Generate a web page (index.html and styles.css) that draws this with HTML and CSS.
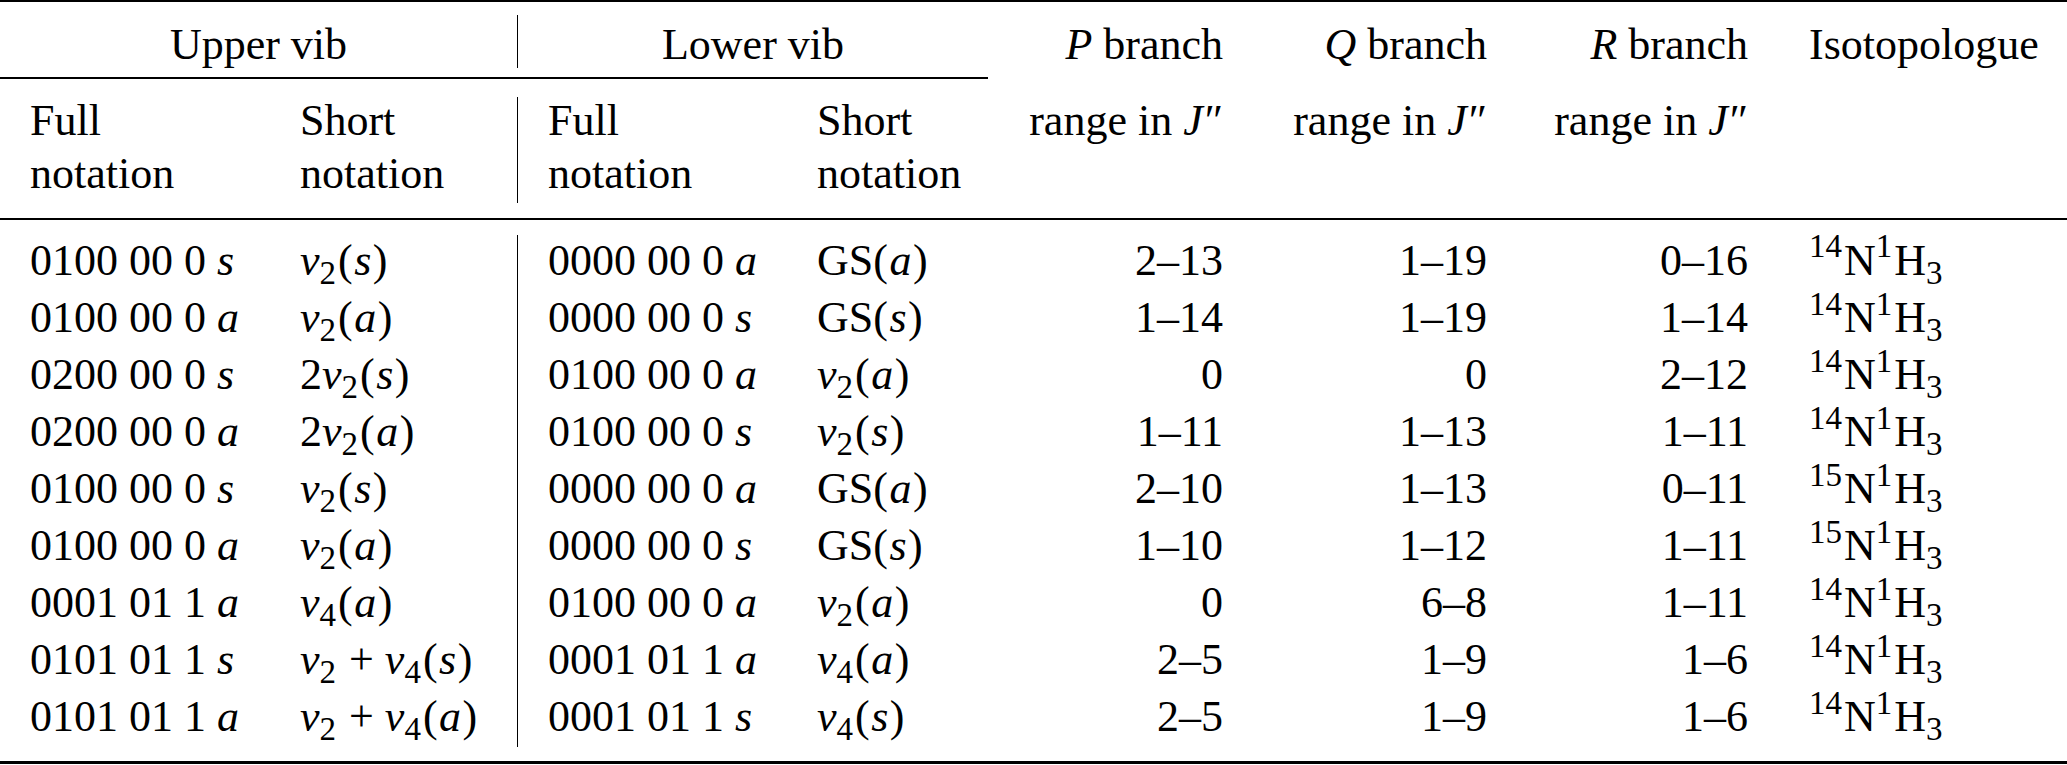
FILE: index.html
```html
<!DOCTYPE html>
<html>
<head>
<meta charset="utf-8">
<link rel="stylesheet" href="styles.css">
</head>
<body>
<div class="tbl">
  <div class="rule rule-top"></div>

  <div class="grid head1">
    <div class="c span2 center">Upper vib</div>
    <div class="vline vline-h1"></div>
    <div class="c span2 center">Lower vib</div>
    <div class="c num"><i>P</i> branch</div>
    <div class="c num"><i>Q</i> branch</div>
    <div class="c num"><i>R</i> branch</div>
    <div class="c iso">Isotopologue</div>
  </div>

  <div class="grid cmid-row"><div class="cmid"></div></div>

  <div class="grid head2">
    <div class="c first">Full<br>notation</div>
    <div class="c">Short<br>notation</div>
    <div class="vline vline-h2"></div>
    <div class="c first">Full<br>notation</div>
    <div class="c">Short<br>notation</div>
    <div class="c num">range in <i>J</i><span class="pr">″</span></div>
    <div class="c num">range in <i>J</i><span class="pr">″</span></div>
    <div class="c num">range in <i>J</i><span class="pr">″</span></div>
    <div class="c iso"></div>
  </div>

  <div class="rule rule-mid"></div>

  <div class="grid body">
    <div class="vline vline-body"></div>

    <div class="c first">0100 00 0 <i>s</i></div>
    <div class="c"><i>ν</i><sub>2</sub>(<i class="v">s</i>)</div>
    <div class="c first">0000 00 0 <i>a</i></div>
    <div class="c">GS(<i class="v">a</i>)</div>
    <div class="c num">2–13</div>
    <div class="c num">1–19</div>
    <div class="c num">0–16</div>
    <div class="c iso"><sup>14</sup>N<sup>1</sup>H<sub>3</sub></div>

    <div class="c first">0100 00 0 <i>a</i></div>
    <div class="c"><i>ν</i><sub>2</sub>(<i class="v">a</i>)</div>
    <div class="c first">0000 00 0 <i>s</i></div>
    <div class="c">GS(<i class="v">s</i>)</div>
    <div class="c num">1–14</div>
    <div class="c num">1–19</div>
    <div class="c num">1–14</div>
    <div class="c iso"><sup>14</sup>N<sup>1</sup>H<sub>3</sub></div>

    <div class="c first">0200 00 0 <i>s</i></div>
    <div class="c">2<i>ν</i><sub>2</sub>(<i class="v">s</i>)</div>
    <div class="c first">0100 00 0 <i>a</i></div>
    <div class="c"><i>ν</i><sub>2</sub>(<i class="v">a</i>)</div>
    <div class="c num">0</div>
    <div class="c num">0</div>
    <div class="c num">2–12</div>
    <div class="c iso"><sup>14</sup>N<sup>1</sup>H<sub>3</sub></div>

    <div class="c first">0200 00 0 <i>a</i></div>
    <div class="c">2<i>ν</i><sub>2</sub>(<i class="v">a</i>)</div>
    <div class="c first">0100 00 0 <i>s</i></div>
    <div class="c"><i>ν</i><sub>2</sub>(<i class="v">s</i>)</div>
    <div class="c num">1–11</div>
    <div class="c num">1–13</div>
    <div class="c num">1–11</div>
    <div class="c iso"><sup>14</sup>N<sup>1</sup>H<sub>3</sub></div>

    <div class="c first">0100 00 0 <i>s</i></div>
    <div class="c"><i>ν</i><sub>2</sub>(<i class="v">s</i>)</div>
    <div class="c first">0000 00 0 <i>a</i></div>
    <div class="c">GS(<i class="v">a</i>)</div>
    <div class="c num">2–10</div>
    <div class="c num">1–13</div>
    <div class="c num">0–11</div>
    <div class="c iso"><sup>15</sup>N<sup>1</sup>H<sub>3</sub></div>

    <div class="c first">0100 00 0 <i>a</i></div>
    <div class="c"><i>ν</i><sub>2</sub>(<i class="v">a</i>)</div>
    <div class="c first">0000 00 0 <i>s</i></div>
    <div class="c">GS(<i class="v">s</i>)</div>
    <div class="c num">1–10</div>
    <div class="c num">1–12</div>
    <div class="c num">1–11</div>
    <div class="c iso"><sup>15</sup>N<sup>1</sup>H<sub>3</sub></div>

    <div class="c first">0001 01 1 <i>a</i></div>
    <div class="c"><i>ν</i><sub>4</sub>(<i class="v">a</i>)</div>
    <div class="c first">0100 00 0 <i>a</i></div>
    <div class="c"><i>ν</i><sub>2</sub>(<i class="v">a</i>)</div>
    <div class="c num">0</div>
    <div class="c num">6–8</div>
    <div class="c num">1–11</div>
    <div class="c iso"><sup>14</sup>N<sup>1</sup>H<sub>3</sub></div>

    <div class="c first">0101 01 1 <i>s</i></div>
    <div class="c"><i>ν</i><sub>2</sub> + <i>ν</i><sub>4</sub>(<i class="v">s</i>)</div>
    <div class="c first">0001 01 1 <i>a</i></div>
    <div class="c"><i>ν</i><sub>4</sub>(<i class="v">a</i>)</div>
    <div class="c num">2–5</div>
    <div class="c num">1–9</div>
    <div class="c num">1–6</div>
    <div class="c iso"><sup>14</sup>N<sup>1</sup>H<sub>3</sub></div>

    <div class="c first">0101 01 1 <i>a</i></div>
    <div class="c"><i>ν</i><sub>2</sub> + <i>ν</i><sub>4</sub>(<i class="v">a</i>)</div>
    <div class="c first">0001 01 1 <i>s</i></div>
    <div class="c"><i>ν</i><sub>4</sub>(<i class="v">s</i>)</div>
    <div class="c num">2–5</div>
    <div class="c num">1–9</div>
    <div class="c num">1–6</div>
    <div class="c iso"><sup>14</sup>N<sup>1</sup>H<sub>3</sub></div>
  </div>

  <div class="rule rule-bottom"></div>
</div>
</body>
</html>
```

FILE: styles.css
```css
html, body {
  margin: 0;
  padding: 0;
  background: #ffffff;
}

body {
  font-family: "Liberation Serif", "Times New Roman", serif;
  font-size: 44px;
  color: #000000;
}

.tbl {
  width: 2067px;
}

.grid {
  display: grid;
  grid-template-columns: 300px 217px 1px 299px 171px 235px 264px 261px 319px;
}

.rule {
  background: #000000;
}

.rule-top {
  height: 2px;
}

.rule-mid {
  height: 2px;
}

.rule-bottom {
  height: 3px;
}

.c {
  white-space: nowrap;
}

.span2 {
  grid-column: span 2;
}

.center {
  text-align: center;
}

.first {
  padding-left: 30px;
}

.num {
  text-align: right;
}

.iso {
  padding-left: 61px;
}

.vline {
  grid-column: 3;
  background: #000000;
  width: 1px;
}

/* header row 1 */
.head1 {
  height: 75px;
  line-height: 57px;
}

.head1 .c {
  padding-top: 13.6px;
}

.vline-h1 {
  margin-top: 13px;
  height: 53px;
}

/* cmidrule */
.cmid-row {
  height: 2px;
}

.cmid {
  grid-column: 1 / 6;
  background: #000000;
  height: 1.5px;
}

/* header row 2 */
.head2 {
  height: 139px;
  line-height: 53px;
}

.head2 .c {
  padding-top: 14.6px;
}

.vline-h2 {
  margin-top: 18px;
  height: 106px;
}

/* body */
.body {
  grid-auto-rows: 57.1px;
  line-height: 57.1px;
  padding-top: 11.6px;
  padding-bottom: 15.5px;
}

.vline-body {
  grid-row: 1 / 10;
  align-self: start;
  margin-top: 3.4px;
  height: 512px;
}

i {
  font-style: italic;
}

i.v {
  margin: 0 1.5px;
}

sub, sup {
  font-size: 0.75em;
  line-height: 0;
  position: relative;
  vertical-align: baseline;
}

sub {
  top: 0.27em;
  margin-right: 2px;
}

sup {
  top: -0.52em;
  margin-right: 2px;
}

.iso sub {
  margin-right: 0;
}

.pr {
  margin-left: 2px;
}
```
